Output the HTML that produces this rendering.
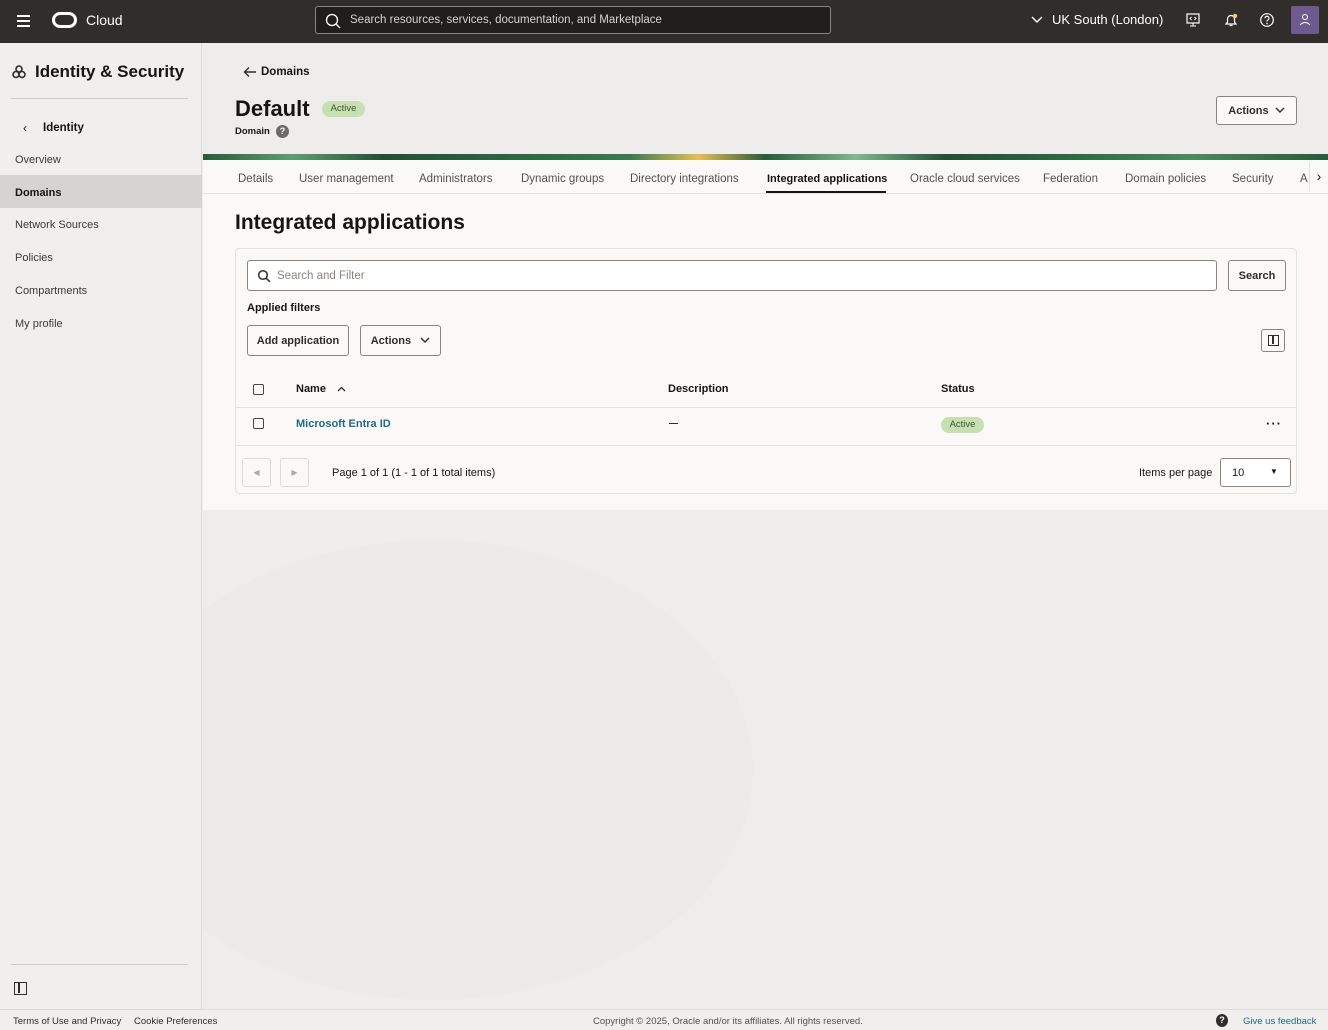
<!DOCTYPE html>
<html><head><meta charset="utf-8"><style>
*{box-sizing:border-box;margin:0;padding:0}
body{width:1328px;height:1030px;overflow:hidden;font-family:"Liberation Sans",sans-serif;background:#efedeb;color:#161513;position:relative;font-size:12px}
.abs{position:absolute}
.top{left:0;top:0;width:1328px;height:43px;background:#312d2a;color:#fff}
.side{left:0;top:43px;width:202px;height:966px;background:#f1efed;border-right:1px solid #dedbd8}
.side .it{position:absolute;left:15px;font-size:11px;color:#3d3a37}
.main{left:203px;top:43px;width:1125px;height:966px;background:#efedeb}
.panel{left:203px;top:160px;width:1125px;height:350px;background:#fbf9f8}
.tab{position:absolute;top:172px;font-size:11.5px;color:#55514d}
.btn{position:absolute;border:1px solid #8a8580;border-radius:3px;background:#fbf9f8;font-size:11px;font-weight:bold;color:#312d2a;display:flex;align-items:center;justify-content:center}
.cb{position:absolute;width:11px;height:11px;border:1.5px solid #4a4643;border-radius:2px}
.footer{left:0;top:1009px;width:1328px;height:21px;background:#f1efed;border-top:1px solid #dedbd8;font-size:9.5px;color:#312d2a}
</style></head><body>
<div class="abs top">
 <div class="abs" style="left:17px;top:15px;width:13px;height:2px;background:#fff;box-shadow:0 5px 0 #fff,0 10px 0 #fff"></div>
 <div class="abs" style="left:52px;top:12px;width:25px;height:16px;border:3px solid #fff;border-radius:8px"></div>
 <div class="abs" style="left:86px;top:12px;font-size:14px">Cloud</div>
 <div class="abs" style="left:315px;top:6px;width:516px;height:28px;border:1px solid #8a8580;border-radius:3px;background:#201d1b">
  <svg class="abs" style="left:9px;top:6px" width="16" height="16" viewBox="0 0 16 16"><circle cx="7" cy="7" r="5.5" stroke="#fff" stroke-width="1.3" fill="none"/><path d="M11 11l4 4" stroke="#fff" stroke-width="1.3"/></svg>
  <div class="abs" style="left:34px;top:7px;font-size:11.5px;color:#d8d4d0">Search resources, services, documentation, and Marketplace</div>
 </div>
 <svg class="abs" style="left:1031px;top:15px" width="12" height="10"><path d="M1 2l5 5 5-5" stroke="#fff" stroke-width="1.4" fill="none"/></svg>
 <div class="abs" style="left:1052px;top:12px;font-size:13px">UK South (London)</div>
 <svg class="abs" style="left:1185px;top:12px" width="16" height="16" viewBox="0 0 16 16"><rect x="2" y="2" width="12" height="9" stroke="#fff" fill="none" stroke-width="1.2"/><path d="M8 11v3M5 14h6M6.5 5l-1.5 1.5 1.5 1.5M9.5 5l1.5 1.5-1.5 1.5" stroke="#fff" fill="none"/></svg>
 <svg class="abs" style="left:1223px;top:12px" width="16" height="16" viewBox="0 0 16 16"><path d="M3 12h10l-1.5-2V7a3.5 3.5 0 0 0-7 0v3z M6.5 13.5h3" stroke="#fff" fill="none" stroke-width="1.2"/><circle cx="12" cy="4" r="2.2" fill="#f0cc71"/></svg>
 <svg class="abs" style="left:1259px;top:12px" width="16" height="16" viewBox="0 0 16 16"><circle cx="8" cy="8" r="6.3" stroke="#fff" fill="none" stroke-width="1.2"/><path d="M6 6.3a2 2 0 1 1 2.5 1.9c-.5.2-.5.6-.5 1.3" stroke="#fff" fill="none" stroke-width="1.2"/><circle cx="8" cy="11.5" r=".8" fill="#fff"/></svg>
 <div class="abs" style="left:1291px;top:6px;width:28px;height:28px;background:#6f5a8f;border-radius:2px"><svg width="28" height="28"><circle cx="14" cy="11" r="2.5" stroke="#fff" fill="none"/><path d="M9 19q5-5 10 0" stroke="#fff" fill="none"/></svg></div>
</div>

<div class="abs side">
 <svg class="abs" style="left:12px;top:22px" width="14" height="14" viewBox="0 0 14 14"><circle cx="7" cy="4" r="3" stroke="#312d2a" stroke-width="1.6" fill="none"/><circle cx="4" cy="9.5" r="3" stroke="#312d2a" stroke-width="1.6" fill="none"/><circle cx="10" cy="9.5" r="3" stroke="#312d2a" stroke-width="1.6" fill="none"/></svg>
 <div class="abs" style="left:35px;top:19px;font-size:17px;font-weight:bold;color:#161513">Identity &amp; Security</div>
 <div class="abs" style="left:11px;top:55px;width:177px;height:1px;background:#d0ccc8"></div>
 <div class="abs" style="left:23px;top:78px;font-size:12px">‹</div>
 <div class="abs" style="left:43px;top:79px;font-size:11.5px;font-weight:bold">Identity</div>
 <div class="it" style="top:111px">Overview</div>
 <div class="abs" style="left:0;top:132px;width:202px;height:33px;background:#d6d3d0"></div>
 <div class="it" style="top:144px;font-weight:bold;color:#161513">Domains</div>
 <div class="it" style="top:176px">Network Sources</div>
 <div class="it" style="top:209px">Policies</div>
 <div class="it" style="top:242px">Compartments</div>
 <div class="it" style="top:275px">My profile</div>
 <div class="abs" style="left:11px;top:921px;width:177px;height:1px;background:#d0ccc8"></div>
 <div class="abs" style="left:14px;top:939px;width:13px;height:13px;border:1.5px solid #312d2a"><div style="position:absolute;left:3px;top:0;width:1.5px;height:10px;background:#312d2a"></div></div>
</div>

<div class="abs main"></div>
<svg class="abs" style="left:203px;top:520px" width="560" height="490"><ellipse cx="230" cy="250" rx="320" ry="230" fill="#ebe8e5" opacity=".45"/></svg>

<svg class="abs" style="left:243px;top:66px" width="14" height="12"><path d="M13 6H2M6 1.5L1.5 6 6 10.5" stroke="#312d2a" stroke-width="1.4" fill="none"/></svg>
<div class="abs" style="left:261px;top:66px;font-size:11.5px;font-weight:bold">Domains</div>
<div class="abs" style="left:235px;top:96px;font-size:22px;font-weight:bold">Default</div>
<div class="abs" style="left:322px;top:101px;width:43px;height:16px;background:#c7dfb1;border-radius:8px;font-size:9.5px;color:#3c5a2a;text-align:center;line-height:16px">Active</div>
<div class="abs" style="left:235px;top:126px;font-size:9.5px;font-weight:bold">Domain</div>
<div class="abs" style="left:276px;top:125px;width:13px;height:13px;border-radius:50%;background:#6f6a66;color:#fff;font-size:9px;text-align:center;line-height:13px;font-weight:bold">?</div>
<div class="btn" style="left:1216px;top:96px;width:81px;height:29px">Actions&nbsp;&nbsp;<svg width="10" height="7"><path d="M1 1l4 4 4-4" stroke="#312d2a" stroke-width="1.4" fill="none"/></svg></div>

<div class="abs" style="left:203px;top:154px;width:1125px;height:6px;background:linear-gradient(90deg,#2a5a3a,#5f9e70 8%,#244f33 16%,#2f6b45 30%,#3c7a50 38%,#e3bf58 44%,#2a5a3a 50%,#7fb890 58%,#244f33 66%,#2f6b45 78%,#4d8a5c 88%,#2a5a3a)"></div>
<div class="abs panel"></div>
<div class="abs" style="left:203px;top:193px;width:1125px;height:1px;background:#e4e1de"></div>
<div class="tab" style="left:238px;top:173px">Details</div>
<div class="tab" style="left:299px;top:173px">User management</div>
<div class="tab" style="left:419px;top:173px">Administrators</div>
<div class="tab" style="left:521px;top:173px">Dynamic groups</div>
<div class="tab" style="left:630px;top:173px">Directory integrations</div>
<div class="tab" style="left:767px;color:#161513;font-weight:bold;font-size:11px;top:173px">Integrated applications</div>
<div class="abs" style="left:766px;top:191px;width:120px;height:2px;background:#161513"></div>
<div class="tab" style="left:910px;top:173px">Oracle cloud services</div>
<div class="tab" style="left:1043px;top:173px">Federation</div>
<div class="tab" style="left:1125px;top:173px">Domain policies</div>
<div class="tab" style="left:1232px;top:173px">Security</div>
<div class="tab" style="left:1300px;top:173px">A</div>
<div class="abs" style="left:1309px;top:162px;width:19px;height:30px;background:#fbf9f8;border-left:1px solid #e4e1de;font-size:14px;text-align:center;line-height:28px">›</div>

<div class="abs" style="left:235px;top:211px;font-size:21px;font-weight:bold">Integrated applications</div>
<div class="abs" style="left:235px;top:248px;width:1062px;height:246px;border:1px solid #e4e1de;border-radius:4px"></div>
<div class="abs" style="left:247px;top:260px;width:970px;height:31px;border:1px solid #8a8580;border-radius:3px;background:#fff">
 <svg class="abs" style="left:9px;top:8px" width="14" height="14"><circle cx="6" cy="6" r="4.3" stroke="#312d2a" stroke-width="1.5" fill="none"/><path d="M9.3 9.3l3.5 3.5" stroke="#312d2a" stroke-width="1.5"/></svg>
 <div class="abs" style="left:29px;top:9px;font-size:11.5px;color:#8a8580">Search and Filter</div>
</div>
<div class="btn" style="left:1228px;top:260px;width:58px;height:31px">Search</div>
<div class="abs" style="left:247px;top:302px;font-size:11px;font-weight:bold">Applied filters</div>
<div class="btn" style="left:247px;top:325px;width:102px;height:31px">Add application</div>
<div class="btn" style="left:360px;top:325px;width:81px;height:31px">Actions&nbsp;&nbsp;&nbsp;<svg width="10" height="7"><path d="M1 1l4 4 4-4" stroke="#312d2a" stroke-width="1.4" fill="none"/></svg></div>
<div class="btn" style="left:1261px;top:329px;width:24px;height:23px"><div style="width:11px;height:11px;border:1.5px solid #312d2a;position:relative"><div style="position:absolute;left:3.5px;top:0;width:1.5px;height:8px;background:#312d2a"></div></div></div>

<div class="cb" style="left:253px;top:384px"></div>
<div class="abs" style="left:296px;top:383px;font-size:11px;font-weight:bold">Name</div>
<svg class="abs" style="left:337px;top:386px" width="9" height="6"><path d="M1 5l3.5-3.5L8 5" stroke="#312d2a" stroke-width="1.3" fill="none"/></svg>
<div class="abs" style="left:668px;top:383px;font-size:11px;font-weight:bold">Description</div>
<div class="abs" style="left:941px;top:383px;font-size:11px;font-weight:bold">Status</div>
<div class="abs" style="left:236px;top:407px;width:1060px;height:1px;background:#e4e1de"></div>
<div class="cb" style="left:253px;top:418px"></div>
<div class="abs" style="left:296px;top:418px;font-size:11px;font-weight:bold;color:#1f6a8a">Microsoft Entra ID</div>
<div class="abs" style="left:669px;top:423px;width:9px;height:1.2px;background:#312d2a"></div>
<div class="abs" style="left:941px;top:417px;width:43px;height:16px;background:#c7dfb1;border-radius:8px;font-size:9.5px;color:#3c5a2a;text-align:center;line-height:16px">Active</div>
<div class="abs" style="left:1266px;top:416px;font-size:13px;font-weight:bold;letter-spacing:1px">···</div>
<div class="abs" style="left:236px;top:445px;width:1060px;height:1px;background:#e4e1de"></div>
<div class="abs" style="left:242px;top:458px;width:29px;height:29px;border:1px solid #dedbd8;border-radius:3px;color:#aaa;font-size:8px;text-align:center;line-height:27px">◀</div>
<div class="abs" style="left:280px;top:458px;width:29px;height:29px;border:1px solid #dedbd8;border-radius:3px;color:#aaa;font-size:8px;text-align:center;line-height:27px">▶</div>
<div class="abs" style="left:332px;top:467px;font-size:11px">Page 1 of 1 (1 - 1 of 1 total items)</div>
<div class="abs" style="left:1139px;top:467px;font-size:11px">Items per page</div>
<div class="abs" style="left:1220px;top:458px;width:71px;height:29px;border:1px solid #8a8580;border-radius:3px;background:#fff;font-size:11px;padding:8px 0 0 11px">10<span style="position:absolute;left:49px;top:8px;font-size:8px">▼</span></div>

<div class="abs footer">
 <div class="abs" style="left:13px;top:6px">Terms of Use and Privacy</div>
 <div class="abs" style="left:134px;top:6px">Cookie Preferences</div>
 <div class="abs" style="left:593px;top:6px;color:#55514d">Copyright © 2025, Oracle and/or its affiliates. All rights reserved.</div>
 <div class="abs" style="left:1216px;top:4px;width:12px;height:13px;border-radius:50%;background:#312d2a;color:#fff;font-size:9px;text-align:center;line-height:13px;font-weight:bold">?</div>
 <div class="abs" style="left:1243px;top:6px;color:#1f6a8a">Give us feedback</div>
</div>
</body></html>
